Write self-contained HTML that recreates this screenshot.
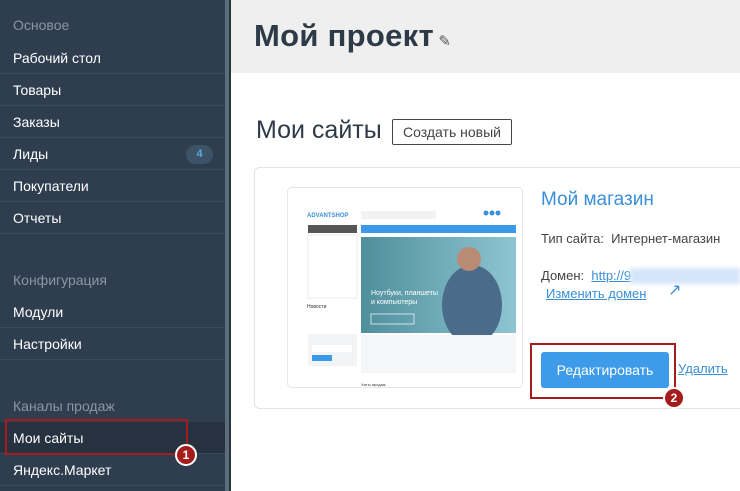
<!DOCTYPE html>
<html><head><meta charset="utf-8"><style>
*{margin:0;padding:0;box-sizing:border-box}
body{width:740px;height:491px;overflow:hidden;font-family:"Liberation Sans","DejaVu Sans",sans-serif;background:#fff;position:relative}
.sb{position:absolute;left:0;top:0;width:225px;height:491px;background:#2f3e4f}
.sb2{position:absolute;left:225px;top:0;width:4px;height:491px;background:#5d6c7c}
.sb3{position:absolute;left:229px;top:0;width:2px;height:491px;background:#27333f}
.it{position:absolute;left:0;width:225px;height:32px;border-bottom:1px solid #3a4a5b;color:#fff;font-size:14px;padding-left:13px;line-height:32px}
.hd{position:absolute;left:13px;color:#8a96a3;font-size:14px}
.badge{position:absolute;right:12px;top:7px;width:27px;height:19px;border-radius:10px;background:#3c5266;color:#5aa7e0;font-size:11px;text-align:center;line-height:19px;font-weight:bold}
.top{position:absolute;left:231px;top:0;width:509px;height:73px;background:#efefef}
h1{position:absolute;left:254px;top:18px;font-size:31px;color:#2d3a47;font-weight:bold;letter-spacing:.3px}
h2{position:absolute;left:256px;top:116px;font-size:25px;color:#2d3a47;font-weight:normal}
.btn{position:absolute;left:392px;top:119px;width:120px;height:26px;border:1px solid #444;border-radius:2px;font-size:14px;color:#444;text-align:center;line-height:24px}
.card{position:absolute;left:254px;top:167px;width:500px;height:242px;border:1px solid #e3e3e3;border-radius:6px}
.red{position:absolute;border:2px solid #a61c1c}
.num{position:absolute;width:22px;height:22px;border-radius:50%;background:#a61c1c;border:2px solid #fff;color:#fff;font-size:12px;font-weight:bold;text-align:center;line-height:18px}
a{color:#3a8fd8;text-decoration:underline}
</style></head><body>
<div class="sb"></div><div class="sb2"></div><div class="sb3"></div>
<div class="hd" style="top:17px">Основое</div>
<div class="it" style="top:42px">Рабочий стол</div>
<div class="it" style="top:74px">Товары</div>
<div class="it" style="top:106px">Заказы</div>
<div class="it" style="top:138px">Лиды<div class="badge">4</div></div>
<div class="it" style="top:170px">Покупатели</div>
<div class="it" style="top:202px">Отчеты</div>
<div class="hd" style="top:272px">Конфигурация</div>
<div class="it" style="top:296px">Модули</div>
<div class="it" style="top:328px">Настройки</div>
<div class="hd" style="top:398px">Каналы продаж</div>
<div class="it" style="top:422px;background:#26323f">Мои сайты</div>
<div class="it" style="top:454px">Яндекс.Маркет</div>
<div class="red" style="left:5px;top:419px;width:183px;height:36px"></div>
<div class="num" style="left:175px;top:444px">1</div>

<div class="top"></div>
<h1>Мой проект<span style="font-size:15px;color:#555;font-weight:normal"> ✎</span></h1>
<h2>Мои сайты</h2>
<div class="btn">Создать новый</div>
<div class="card"></div>
<svg style="position:absolute;left:287px;top:187px" width="236" height="201">
<rect x=".5" y=".5" width="235" height="200" rx="4" fill="#fff" stroke="#e6e6e6"/>
<text x="20" y="30" font-size="6" fill="#3a8fd8" font-family="Liberation Sans" font-weight="bold">ADVANTSHOP</text>
<rect x="74" y="24" width="75" height="8" fill="#f2f2f2"/>
<circle cx="199" cy="26" r="2.5" fill="#3a8fd8"/><circle cx="205" cy="26" r="2.5" fill="#3a8fd8"/><circle cx="211" cy="26" r="2.5" fill="#3a8fd8"/>
<rect x="21" y="38" width="49" height="8" fill="#555"/>
<rect x="74" y="38" width="155" height="8" fill="#3a9ae8"/>
<rect x="21" y="48" width="49" height="63" fill="#fff" stroke="#eee"/>
<defs><linearGradient id="g" x1="0" x2="1"><stop offset="0" stop-color="#4f8f9c"/><stop offset="1" stop-color="#8fc5d3"/></linearGradient></defs>
<rect x="74" y="50" width="155" height="96" fill="url(#g)"/>
<ellipse cx="185" cy="118" rx="30" ry="40" fill="#4a6b8a"/>
<circle cx="182" cy="72" r="12" fill="#b98a74"/>
<text x="84" y="108" font-size="7" fill="#fff" font-family="Liberation Sans">Ноутбуки, планшеты</text>
<text x="84" y="117" font-size="7" fill="#fff" font-family="Liberation Sans">и компьютеры</text>
<rect x="84" y="127" width="43" height="10" fill="none" stroke="#fff" stroke-width=".7"/>
<rect x="74" y="148" width="155" height="38" fill="#f5f6f7"/>
<text x="20" y="121" font-size="5" fill="#333" font-family="Liberation Sans">Новости</text>
<rect x="21" y="147" width="49" height="32" fill="#f2f3f4"/>
<rect x="25" y="158" width="40" height="7" fill="#fff"/>
<rect x="25" y="168" width="20" height="6" fill="#3a9ae8"/>
<text x="74" y="199" font-size="4" fill="#333" font-family="Liberation Sans">Хиты продаж</text>
</svg>
<div style="position:absolute;left:541px;top:189px;font-size:19px;color:#3a8fd8">Мой магазин</div>
<div style="position:absolute;left:541px;top:231px;font-size:13px;color:#444">Тип сайта:&nbsp; Интернет-магазин</div>
<div style="position:absolute;left:541px;top:268px;font-size:13px;color:#444">Домен:&nbsp; <a>http://9</a></div>
<div style="position:absolute;left:630px;top:268px;width:110px;height:16px;background:#d5e6fa;filter:blur(2px)"></div>
<div style="position:absolute;left:546px;top:286px;font-size:13px"><a>Изменить домен</a></div>
<div style="position:absolute;left:668px;top:280px;font-size:16px;color:#3a8fd8">↗</div>
<div style="position:absolute;left:541px;top:352px;width:128px;height:36px;background:#3d9be9;border-radius:3px;color:#fff;font-size:14px;text-align:center;line-height:36px">Редактировать</div>
<div style="position:absolute;left:678px;top:361px;font-size:13px"><a>Удалить</a></div>
<div class="red" style="left:530px;top:343px;width:146px;height:56px"></div>
<div class="num" style="left:663px;top:387px">2</div>
</body></html>
